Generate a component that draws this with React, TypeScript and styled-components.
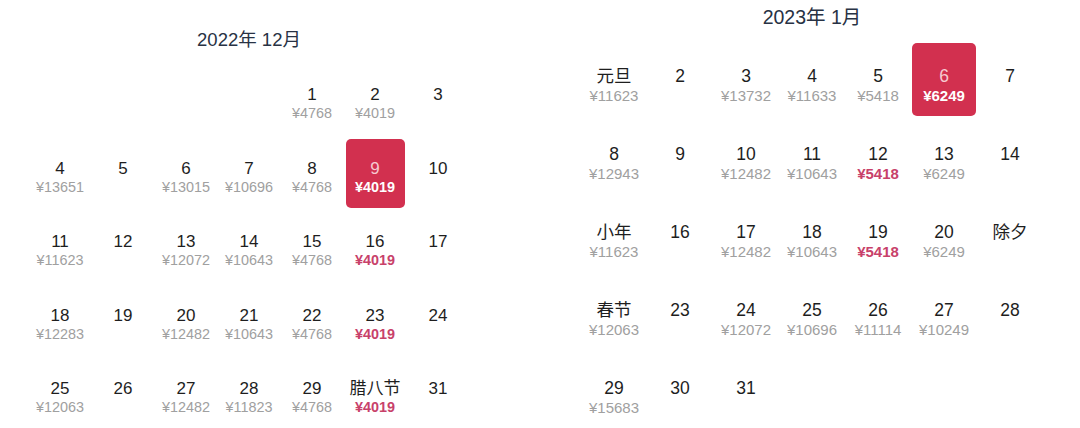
import React from "react";
import styled, { createGlobalStyle } from "styled-components";

const GlobalStyle = createGlobalStyle`
  html, body {
    margin: 0;
    padding: 0;
    background: #ffffff;
  }
  body {
    font-family: "Liberation Sans", "Noto Sans CJK SC", Arial, sans-serif;
    -webkit-font-smoothing: antialiased;
  }
`;

type Day = {
  label?: string;
  price?: string;
  hot?: boolean;
  selected?: boolean;
};

type Scale = {
  colW: number;
  rowH: number;
  titleSize: number;
  titleTop: number;
  titleGap: number;
  daySize: number;
  dayLine: number;
  dayTop: number;
  priceSize: number;
  priceLine: number;
  insetX: number;
};

const Page = styled.main`
  display: flex;
  align-items: flex-start;
  width: 1080px;
  height: 428px;
  overflow: hidden;
  padding-left: 28.5px;
  gap: 111.5px;
  box-sizing: border-box;
`;

const Panel = styled.section<{ $s: Scale }>`
  width: ${(p) => p.$s.colW * 7}px;
  padding-top: ${(p) => p.$s.titleTop}px;
  display: flex;
  flex-direction: column;
  align-items: center;
`;

const Title = styled.h2<{ $s: Scale }>`
  margin: 0 0 ${(p) => p.$s.titleGap}px;
  font-size: ${(p) => p.$s.titleSize}px;
  line-height: 24px;
  font-weight: 400;
  color: #283244;
`;

const Grid = styled.div<{ $s: Scale }>`
  width: 100%;
  display: grid;
  grid-template-columns: repeat(7, ${(p) => p.$s.colW}px);
  grid-auto-rows: ${(p) => p.$s.rowH}px;
`;

const Cell = styled.div<{ $s: Scale }>`
  padding: 2.5px ${(p) => p.$s.insetX}px;
  box-sizing: border-box;
`;

const Box = styled.div<{ $s: Scale; $selected?: boolean }>`
  height: 100%;
  box-sizing: border-box;
  display: flex;
  flex-direction: column;
  align-items: center;
  padding-top: ${(p) => p.$s.dayTop - 2.5}px;
  border-radius: 5px;
  background: ${(p) => (p.$selected ? "#d2304f" : "transparent")};
`;

const DayNum = styled.span<{ $s: Scale; $selected?: boolean }>`
  font-size: ${(p) => p.$s.daySize}px;
  line-height: ${(p) => p.$s.dayLine}px;
  color: ${(p) => (p.$selected ? "#f6c9d0" : "#1e1e1e")};
  white-space: nowrap;
`;

const Price = styled.span<{ $s: Scale; $tone: "gray" | "hot" | "selected" }>`
  font-size: ${(p) => p.$s.priceSize}px;
  line-height: ${(p) => p.$s.priceLine}px;
  white-space: nowrap;
  font-weight: ${(p) => (p.$tone === "gray" ? 400 : 700)};
  color: ${(p) =>
    p.$tone === "selected" ? "#ffffff" : p.$tone === "hot" ? "#c8416a" : "#a0a0a0"};
`;

const d = (label?: string, price?: string, extra: Partial<Day> = {}): Day => ({
  label,
  price: price ? `¥${price}` : undefined,
  ...extra,
});

const december: Day[] = [
  d(), d(), d(), d(), d("1", "4768"), d("2", "4019"), d("3"),
  d("4", "13651"), d("5"), d("6", "13015"), d("7", "10696"), d("8", "4768"), d("9", "4019", { selected: true }), d("10"),
  d("11", "11623"), d("12"), d("13", "12072"), d("14", "10643"), d("15", "4768"), d("16", "4019", { hot: true }), d("17"),
  d("18", "12283"), d("19"), d("20", "12482"), d("21", "10643"), d("22", "4768"), d("23", "4019", { hot: true }), d("24"),
  d("25", "12063"), d("26"), d("27", "12482"), d("28", "11823"), d("29", "4768"), d("腊八节", "4019", { hot: true }), d("31"),
];

const january: Day[] = [
  d("元旦", "11623"), d("2"), d("3", "13732"), d("4", "11633"), d("5", "5418"), d("6", "6249", { selected: true }), d("7"),
  d("8", "12943"), d("9"), d("10", "12482"), d("11", "10643"), d("12", "5418", { hot: true }), d("13", "6249"), d("14"),
  d("小年", "11623"), d("16"), d("17", "12482"), d("18", "10643"), d("19", "5418", { hot: true }), d("20", "6249"), d("除夕"),
  d("春节", "12063"), d("23"), d("24", "12072"), d("25", "10696"), d("26", "11114"), d("27", "10249"), d("28"),
  d("29", "15683"), d("30"), d("31"),
];

const leftScale: Scale = {
  colW: 63,
  rowH: 73.5,
  titleSize: 18.5,
  titleTop: 28,
  titleGap: 11,
  daySize: 17,
  dayLine: 20,
  dayTop: 22,
  priceSize: 14.4,
  priceLine: 17,
  insetX: 2,
};

const rightScale: Scale = {
  colW: 66,
  rowH: 78,
  titleSize: 19.5,
  titleTop: 5,
  titleGap: 11.5,
  daySize: 17.5,
  dayLine: 21,
  dayTop: 25,
  priceSize: 15,
  priceLine: 18,
  insetX: 1,
};

function Month({ title, days, scale }: { title: string; days: Day[]; scale: Scale }) {
  return (
    <Panel $s={scale}>
      <Title $s={scale}>{title}</Title>
      <Grid $s={scale}>
        {days.map((day, i) => (
          <Cell key={i} $s={scale}>
            {day.label && (
              <Box $s={scale} $selected={day.selected}>
                <DayNum $s={scale} $selected={day.selected}>
                  {day.label}
                </DayNum>
                {day.price && (
                  <Price
                    $s={scale}
                    $tone={day.selected ? "selected" : day.hot ? "hot" : "gray"}
                  >
                    {day.price}
                  </Price>
                )}
              </Box>
            )}
          </Cell>
        ))}
      </Grid>
    </Panel>
  );
}

export default function App() {
  return (
    <>
      <GlobalStyle />
      <Page>
        <Month title="2022年 12月" days={december} scale={leftScale} />
        <Month title="2023年 1月" days={january} scale={rightScale} />
      </Page>
    </>
  );
}
